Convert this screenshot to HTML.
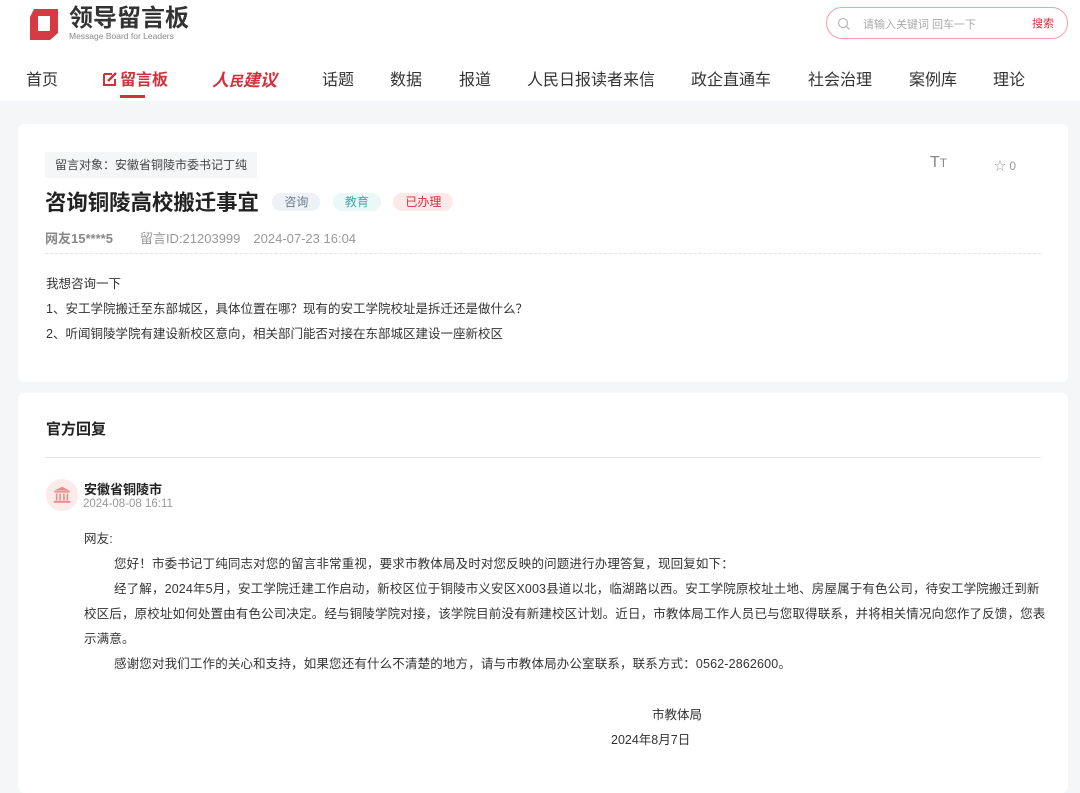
<!DOCTYPE html>
<html><head><meta charset="utf-8">
<style>
*{margin:0;padding:0;box-sizing:border-box}
body{width:1080px;height:770px;overflow:hidden;background:#f5f6f8;font-family:"Liberation Sans","Noto Sans CJK SC",sans-serif;color:#333}
.hdr{background:#fff;height:101px;position:relative}
.logo{position:absolute;left:27px;top:7px}
.logo .t{position:absolute;left:42px;top:-3px;font-size:24px;font-weight:bold;color:#333;white-space:nowrap;letter-spacing:0px;line-height:30px}
.logo .s{position:absolute;left:42px;top:24px;font-size:8.5px;color:#888;white-space:nowrap}
.search{position:absolute;left:826px;top:7px;width:242px;height:32px;border:1px solid #f2a0a8;border-radius:16px}
.search .ph{position:absolute;left:36px;top:8px;font-size:11px;color:#aaa}
.search .b{position:absolute;right:13px;top:7px;font-size:11px;color:#d2303c}
.nav{position:absolute;top:66px;left:0;font-size:16px;color:#333}
.nav span{position:absolute;white-space:nowrap}
.card{position:absolute;left:18px;width:1050px;background:#fff;border-radius:6px}
.tag{display:inline-block;font-size:12px;padding:0 12px;border-radius:10px;height:18px;line-height:18px;vertical-align:middle}
.p{font-size:12.5px;line-height:25px;color:#333}
</style></head><body>
<div class="hdr">
 <div class="logo">
  <svg width="34" height="34" viewBox="0 0 34 34" style="position:absolute;left:0;top:0"><path d="M7 2h24v24l-8 7H3V10z M11 9v15h12V9z" fill="#d83a44" fill-rule="evenodd"/></svg>
  <div class="t">领导留言板</div>
  <div class="s">Message Board for Leaders</div>
 </div>
 <div class="search">
  <svg width="14" height="14" style="position:absolute;left:10px;top:9px"><circle cx="6" cy="6" r="4.5" fill="none" stroke="#bbb" stroke-width="1.3"/><path d="M9.5 9.5l3 3" stroke="#bbb" stroke-width="1.3"/></svg>
  <div class="ph">请输入关键词 回车一下</div><div class="b">搜索</div>
 </div>
 <div class="nav">
  <span style="left:26px">首页</span>
  <span style="left:102px;color:#d2303c;font-weight:bold"><svg width="16" height="16" style="vertical-align:-2px;margin-right:2px"><path d="M2 3h8M2 3v11h11V8" fill="none" stroke="#d2303c" stroke-width="2"/><path d="M6 10l8-8" stroke="#d2303c" stroke-width="2.5"/></svg>留言板</span>
  <div style="position:absolute;left:120px;top:29px;width:25px;height:3px;background:#d2303c"></div>
  <span style="left:212px;color:#d2303c;font-weight:bold;font-style:italic;font-size:17px">人<span style="position:static;font-size:14px">民</span>建议</span>
  <span style="left:322px">话题</span>
  <span style="left:390px">数据</span>
  <span style="left:459px">报道</span>
  <span style="left:527px">人民日报读者来信</span>
  <span style="left:691px">政企直通车</span>
  <span style="left:808px">社会治理</span>
  <span style="left:909px">案例库</span>
  <span style="left:993px">理论</span>
 </div>
</div>

<div class="card" style="top:124px;height:258px">
 <div style="position:absolute;left:27px;top:28px;height:26px;line-height:26px;padding:0 10px;background:#f5f6f8;font-size:12px;color:#444">留言对象：安徽省铜陵市委书记丁纯</div>
 <div style="position:absolute;left:912px;top:30px;font-size:16px;color:#888">T<span style="font-size:12px">T</span></div>
 <div style="position:absolute;left:976px;top:33px;font-size:12px;color:#999">☆ 0</div>
 <div style="position:absolute;left:27px;top:62px;white-space:nowrap">
  <span style="font-size:21.4px;font-weight:bold;color:#222;vertical-align:middle">咨询铜陵高校搬迁事宜</span>
  <span class="tag" style="background:#eef1f6;color:#6a7a90;margin-left:9px">咨询</span>
  <span class="tag" style="background:#eaf8f7;color:#4aa6a8;margin-left:8px">教育</span>
  <span class="tag" style="background:#fde9ea;color:#d2303c;margin-left:8px">已办理</span>
 </div>
 <div style="position:absolute;left:27px;top:104px;font-size:13px;color:#999;white-space:nowrap"><b style="color:#888">网友15****5</b><span style="margin-left:27px">留言ID:21203999</span><span style="margin-left:13px">2024-07-23 16:04</span></div>
 <div style="position:absolute;left:27px;right:27px;top:129px;border-top:1px dashed #e4e4e4"></div>
 <div class="p" style="position:absolute;left:28px;top:148px">我想咨询一下<br>1、安工学院搬迁至东部城区，具体位置在哪？现有的安工学院校址是拆迁还是做什么？<br>2、听闻铜陵学院有建设新校区意向，相关部门能否对接在东部城区建设一座新校区</div>
</div>

<div class="card" style="top:393px;height:400px">
 <div style="position:absolute;left:28px;top:25px;font-size:15px;font-weight:bold;color:#222">官方回复</div>
 <div style="position:absolute;left:27px;right:27px;top:64px;border-top:1px solid #e8e8e8"></div>
 <div style="position:absolute;left:28px;top:86px;width:32px;height:32px;border-radius:50%;background:#fdeaea">
  <svg width="32" height="32" viewBox="0 0 33 33"><path d="M16.5 8l-8 4h16z" fill="#ea8a8a"/><rect x="8.5" y="12.5" width="16" height="1.5" fill="#ea8a8a"/><path d="M11 15v7M14.5 15v7M18.5 15v7M22 15v7" stroke="#ea8a8a" stroke-width="1.6"/><rect x="8" y="22.5" width="17" height="2" fill="#ea8a8a"/></svg>
 </div>
 <div style="position:absolute;left:66px;top:86px;font-size:13px;font-weight:bold;color:#222">安徽省铜陵市</div>
 <div style="position:absolute;left:65px;top:105px;font-size:11.5px;color:#999">2024-08-08 16:11</div>
 <div class="p" style="position:absolute;left:66px;top:134px;width:962px;letter-spacing:0.15px">
  网友:<br>
  <div style="text-indent:2.4em">您好！市委书记丁纯同志对您的留言非常重视，要求市教体局及时对您反映的问题进行办理答复，现回复如下：</div>
  <div style="text-indent:2.4em">经了解，2024年5月，安工学院迁建工作启动，新校区位于铜陵市义安区X003县道以北，临湖路以西。安工学院原校址土地、房屋属于有色公司，待安工学院搬迁到新校区后，原校址如何处置由有色公司决定。经与铜陵学院对接，该学院目前没有新建校区计划。近日，市教体局工作人员已与您取得联系，并将相关情况向您作了反馈，您表示满意。</div>
  <div style="text-indent:2.4em">感谢您对我们工作的关心和支持，如果您还有什么不清楚的地方，请与市教体局办公室联系，联系方式：0562-2862600。</div>
 </div>
 <div class="p" style="position:absolute;left:634px;top:310px">市教体局</div>
 <div class="p" style="position:absolute;left:593px;top:335px">2024年8月7日</div>
</div>
</body></html>
